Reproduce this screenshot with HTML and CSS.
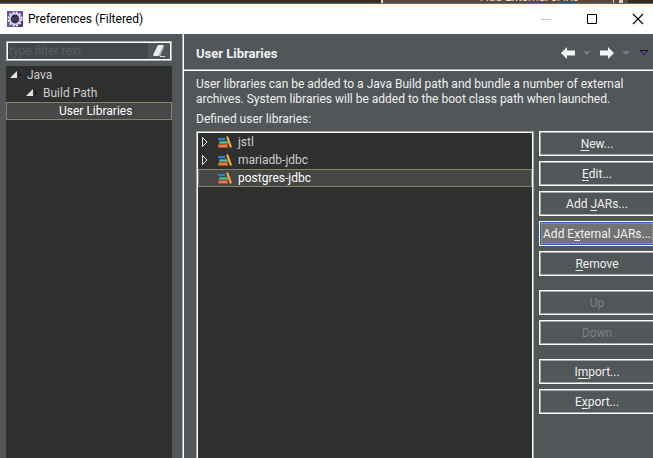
FILE: index.html
```html
<!DOCTYPE html>
<html lang="en">
<head>
<meta charset="utf-8">
<title>Preferences (Filtered)</title>
<link rel="stylesheet" href="styles.css">
</head>
<body>
<svg class="defs" aria-hidden="true">
  <symbol id="books" viewBox="0 0 16 16">
    <path d="M1 4h7v2H1z" fill="#2b83c4"/>
    <path d="M3 6h6v1H3z" fill="#1c5a7c"/>
    <path d="M2 7h9v3H2z" fill="#3f8f6c"/>
    <path d="M3 8h7v1H3z" fill="#6cbf98"/>
    <path d="M1 10h10v4H1z" fill="#b04f2c"/>
    <path d="M2 11h8v2H2z" fill="#d98250"/>
    <path d="M9 3l2-1 4 11-2 1z" fill="#e59c1f"/>
    <path d="M10.500 3l3.500 9.500" fill="none" stroke="#f7bd46"/>
  </symbol>
</svg>
<div class="backdrop"><span class="behind">Add External JARs</span></div>
<div class="window">
  <header class="titlebar">
    <svg class="app-icon" viewBox="0 0 16 16" aria-hidden="true">
      <path d="M0 0h16v16H0z" fill="#6a559c"/>
      <path d="M9 9h7v7H9z" fill="#513a80"/>
      <circle cx="8" cy="8" r="6.500" fill="none" stroke="#eceaf1" stroke-width="2" stroke-dasharray="2 1.400"/>
      <circle cx="8" cy="8" r="5.200" fill="#33294f" stroke="#dedbe6" stroke-width="1.600"/>
      <path d="M4 7h8M4 9h8" stroke="#544b78"/>
    </svg>
    <h1 class="title">Preferences (Filtered)</h1>
    <button class="win-btn" aria-label="Minimize" disabled><svg viewBox="0 0 12 12"><path d="M1 6.5h10" stroke="#c4c4c4"/></svg></button>
    <button class="win-btn" aria-label="Maximize"><svg viewBox="0 0 12 12"><path d="M1.500 1.500h9v9h-9z" fill="none" stroke="#000"/></svg></button>
    <button class="win-btn" aria-label="Close"><svg viewBox="0 0 12 12"><path d="M1 1l10 10M11 1L1 11" stroke="#000" stroke-width="1.100"/></svg></button>
  </header>
  <div class="body">
    <nav class="sidebar">
      <div class="filter">
        <input class="filter-input" type="text" placeholder="type filter text" aria-label="Filter text">
        <button class="clear" aria-label="Clear"><svg viewBox="0 0 16 16"><path d="M7 2h5.500L9 13H3l-1-1z" fill="#ededed"/><path d="M12.500 2l.5 2-4 9H7z" fill="#b5b5b5"/><path d="M9 13.500h5" stroke="#ddd"/></svg></button>
      </div>
      <ul class="tree">
        <li class="node level-1"><svg class="open" viewBox="0 0 12 8"><path d="M7 0v7H0z" fill="#e2e2e2"/><path d="M9 3h2v2H9z" fill="#181818"/></svg>Java</li>
        <li class="node level-2"><svg class="open" viewBox="0 0 12 8"><path d="M7 0v7H0z" fill="#e2e2e2"/><path d="M9 3h2v2H9z" fill="#181818"/></svg>Build Path</li>
        <li class="node level-3 selected">User Libraries</li>
      </ul>
    </nav>
    <main class="page">
      <div class="page-head">
        <h2 class="page-title">User Libraries</h2>
        <button class="nav-btn" aria-label="Back"><svg viewBox="0 0 14 12"><path d="M0 6l6-6v3.500h8v5H6V12z" fill="#f4f4f4"/></svg></button>
        <button class="nav-menu" aria-label="Back history"><svg viewBox="0 0 8 4"><path d="M0 0h8L4 4z" fill="#77797b"/></svg></button>
        <button class="nav-btn" aria-label="Forward"><svg viewBox="0 0 14 12"><path d="M14 6L8 0v3.500H0v5h8V12z" fill="#f4f4f4"/></svg></button>
        <button class="nav-menu" aria-label="Forward history"><svg viewBox="0 0 8 4"><path d="M0 0h8L4 4z" fill="#77797b"/></svg></button>
        <button class="nav-more" aria-label="Menu"><svg viewBox="0 0 10 6"><path d="M1 .5h8L5 5z" fill="#55505e" stroke="#1b1028"/><path d="M1 .5L5 5" stroke="#4b1a90"/></svg></button>
      </div>
      <div class="content">
        <p class="intro">User libraries can be added to a Java Build path and bundle a number of external<br>archives. System libraries will be added to the boot class path when launched.</p>
        <p class="list-label">Defined user libraries:</p>
        <div class="columns">
          <ul class="libraries">
            <li class="library"><svg class="closed" viewBox="0 0 6 10"><path d="M.5.5v9l4.500-4.500z" fill="none" stroke="#e2e2e2"/></svg><svg class="books"><use href="#books"/></svg>jstl</li>
            <li class="library"><svg class="closed" viewBox="0 0 6 10"><path d="M.5.5v9l4.500-4.500z" fill="none" stroke="#e2e2e2"/></svg><svg class="books"><use href="#books"/></svg>mariadb-jdbc</li>
            <li class="library selected"><span class="closed"></span><svg class="books"><use href="#books"/></svg>postgres-jdbc</li>
          </ul>
          <div class="actions">
            <button class="action"><u>N</u>ew...</button>
            <button class="action"><u>E</u>dit...</button>
            <button class="action">Add <u>J</u>ARs...</button>
            <button class="action current">Add E<u>x</u>ternal JARs...</button>
            <button class="action"><u>R</u>emove</button>
            <button class="action group" disabled>Up</button>
            <button class="action" disabled>Down</button>
            <button class="action group">I<u>m</u>port...</button>
            <button class="action">E<u>x</u>port...</button>
          </div>
        </div>
      </div>
    </main>
  </div>
</div>
</body>
</html>
```
FILE: styles.css
```css
* { box-sizing: border-box; }
body {
  margin: 0;
  height: 100vh;
  display: flex;
  flex-direction: column;
  overflow: hidden;
  background: #515658;
  color: #f0f0f0;
  font: 12px/15px Roboto, "Noto Sans", sans-serif;
}
h1, h2, p, ul { margin: 0; padding: 0; font-size: 12px; }
ul { list-style: none; }
button { padding: 0; border: 0; background: none; font: inherit; color: inherit; }
svg { display: block; flex: none; }
u { text-underline-offset: 2px; }
.defs { position: absolute; width: 0; height: 0; }

.backdrop {
  height: 3px;
  flex: none;
  overflow: hidden;
  display: flex;
  align-items: flex-end;
  justify-content: flex-end;
  padding-right: 74px;
  background: linear-gradient(90deg, #2f2f2f 381px, #ddd 381px, #ddd 383px, #4c4c4c 383px, #4c4c4c 613px, #ccc 613px, #ccc 614px, #4c4c4c 614px, #4c4c4c 619px, #ccc 619px, #ccc 623px, #4c4c4c 623px, #4c4c4c 628px, #2b2b2b 628px);
}
.behind { line-height: 11px; color: #ddd; }

.window { flex: 1; min-height: 0; display: flex; flex-direction: column; border-top: 1px solid #2878b8; }
.titlebar { height: 30px; flex: none; display: flex; align-items: center; background: #fff; color: #000; padding-left: 7px; }
.app-icon { width: 16px; height: 16px; }
.title { flex: 1; margin-left: 5px; font-weight: 400; }
.win-btn { width: 46px; height: 30px; display: flex; align-items: center; justify-content: center; }
.win-btn:last-child { margin-right: -8px; }
.win-btn svg { width: 12px; height: 12px; }

.body { flex: 1; min-height: 0; display: flex; }
.sidebar { width: 183px; flex: none; display: flex; flex-direction: column; gap: 5px; padding: 7px 11px 0 6px; }
.filter { height: 20px; flex: none; display: flex; border: 1px solid #b4b4b4; outline: 1px solid #fff; outline-offset: -2px; padding: 1px; }
.filter-input { flex: 1; min-width: 0; padding: 0 1px; border: 0; background: #424749; color: #eee; font: inherit; }
.filter-input::placeholder { color: #5a5e60; opacity: 1; }
.clear { width: 22px; display: flex; align-items: center; justify-content: center; }
.clear svg { width: 16px; height: 16px; }
.tree { flex: 1; background: #2f2f2f; }
.node { height: 18px; display: flex; align-items: center; border: 1px solid transparent; color: #ccc; }
.level-1 { padding-left: 3px; }
.level-2 { padding-left: 19px; }
.level-3 { padding-left: 52px; }
.open { width: 12px; height: 8px; margin-right: 5px; }
.selected { background: #464646; border-color: #84846c; color: #fff; }

.page { flex: 1; min-width: 0; display: flex; flex-direction: column; border-left: 1px solid #fff; box-shadow: -1px 0 #aaa; }
.page-head { height: 37px; flex: none; display: flex; align-items: center; padding: 2px 4px 0 12px; border-bottom: 1px solid #fff; box-shadow: inset 0 -1px #aaa; }
.page-title { flex: 1; font-size: 13px; font-weight: 700; }
.nav-btn svg { width: 14px; height: 12px; }
.nav-menu { margin: 0 9px 0 8px; }
.nav-menu svg { width: 8px; height: 4px; }
.nav-more svg { width: 10px; height: 6px; }
.content { flex: 1; min-height: 0; display: flex; flex-direction: column; padding: 6px 0 0 12px; }
.intro { white-space: nowrap; }
.list-label { margin: 5px 0 4px; }
.columns { flex: 1; min-height: 0; display: flex; gap: 5px; margin-right: -2px; }
.libraries { flex: 1; min-width: 0; padding: 1px; border: 1px solid #aaa; border-bottom: 0; background: #2f2f2f; box-shadow: inset 1px 1px #fff, inset -1px 0 #fff; }
.library { height: 18px; display: flex; align-items: center; padding-left: 3px; border: 1px solid transparent; color: #ccc; }
.library.selected { border-color: #84846c; color: #fff; }
.closed { width: 6px; height: 10px; margin-right: 9px; }
.books { width: 16px; height: 16px; margin-right: 5px; }
.actions { width: 116px; flex: none; display: flex; flex-direction: column; gap: 5px; }
.action { height: 25px; padding-top: 1px; border: 1px solid #fff; box-shadow: inset 0 0 0 1px #aaa; white-space: nowrap; }
.action.current { background: #737373; border-color: #fff; box-shadow: inset 0 0 0 1px #1c66b0; outline: 1px dotted #aaa; outline-offset: -3px; }
.action:disabled { color: #7d8082; }
.group { margin-top: 9px; }
```
